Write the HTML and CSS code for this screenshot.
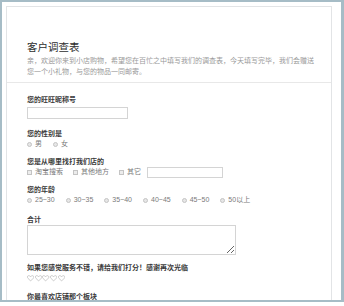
FILE: index.html
```html
<!DOCTYPE html>
<html lang="zh">
<head>
<meta charset="utf-8">
<title>客户调查表</title>
<link rel="stylesheet" href="styles.css">
</head>
<body>
<div class="window">
  <div class="panel">
    <div class="header">
      <h1 class="title">客户调查表</h1>
      <p class="desc">亲，欢迎你来到小店购物，希望您在百忙之中填写我们的调查表，今天填写完毕，我们会赠送您一个小礼物，与您的物品一同邮寄。</p>
    </div>
    <form class="form">
      <div class="field field-text">
        <div class="label">您的旺旺昵称号</div>
        <input class="text-input" type="text">
      </div>
      <div class="field">
        <div class="label">您的性别是</div>
        <div class="options">
          <span class="opt"><span class="radio"></span>男</span>
          <span class="opt"><span class="radio"></span>女</span>
        </div>
      </div>
      <div class="field">
        <div class="label">您是从哪里找打我们店的</div>
        <div class="options checks">
          <span class="opt"><span class="check"></span>淘宝搜索</span>
          <span class="opt"><span class="check"></span>其他地方</span>
          <span class="opt"><span class="check"></span>其它<input class="other-input" type="text"></span>
        </div>
      </div>
      <div class="field field-age">
        <div class="label">您的年龄</div>
        <div class="options">
          <span class="opt"><span class="radio"></span>25~30</span>
          <span class="opt"><span class="radio"></span>30~35</span>
          <span class="opt"><span class="radio"></span>35~40</span>
          <span class="opt"><span class="radio"></span>40~45</span>
          <span class="opt"><span class="radio"></span>45~50</span>
          <span class="opt"><span class="radio"></span>50以上</span>
        </div>
      </div>
      <div class="field">
        <div class="label">合计</div>
        <textarea class="area"></textarea>
      </div>
      <div class="field">
        <div class="label">如果您感觉服务不错，请给我们打分！感谢再次光临</div>
        <div class="hearts">
          <svg class="heart" viewBox="0 0 16 14"><path d="M8 13 L2 7 C0 5 0.5 1.5 3.8 1.2 C5.8 1 7 2.3 8 3.6 C9 2.3 10.2 1 12.2 1.2 C15.5 1.5 16 5 14 7 Z"/></svg>
          <svg class="heart" viewBox="0 0 16 14"><path d="M8 13 L2 7 C0 5 0.5 1.5 3.8 1.2 C5.8 1 7 2.3 8 3.6 C9 2.3 10.2 1 12.2 1.2 C15.5 1.5 16 5 14 7 Z"/></svg>
          <svg class="heart" viewBox="0 0 16 14"><path d="M8 13 L2 7 C0 5 0.5 1.5 3.8 1.2 C5.8 1 7 2.3 8 3.6 C9 2.3 10.2 1 12.2 1.2 C15.5 1.5 16 5 14 7 Z"/></svg>
          <svg class="heart" viewBox="0 0 16 14"><path d="M8 13 L2 7 C0 5 0.5 1.5 3.8 1.2 C5.8 1 7 2.3 8 3.6 C9 2.3 10.2 1 12.2 1.2 C15.5 1.5 16 5 14 7 Z"/></svg>
          <svg class="heart" viewBox="0 0 16 14"><path d="M8 13 L2 7 C0 5 0.5 1.5 3.8 1.2 C5.8 1 7 2.3 8 3.6 C9 2.3 10.2 1 12.2 1.2 C15.5 1.5 16 5 14 7 Z"/></svg>
        </div>
      </div>
      <div class="field">
        <div class="label">你最喜欢店铺那个板块</div>
      </div>
    </form>
  </div>
</div>
</body>
</html>
```
FILE: styles.css
```css
* { box-sizing: border-box; }
html, body {
  margin: 0;
  padding: 0;
  background: #ffffff;
}
body {
  width: 344px;
  height: 306px;
  overflow: hidden;
  font-family: "Liberation Sans", "Noto Sans CJK SC", sans-serif;
}
.window {
  width: 344px;
  height: 302px;
  border-style: solid;
  border-color: #a6bcc6;
  border-width: 2px 3px 2px 2px;
  padding: 4px 9px 0 4px;
  background: #ffffff;
  overflow: hidden;
}
.panel {
  height: 320px;
  border: 1px solid #e2e4e6;
  background: #ffffff;
}
.header {
  padding: 33px 20px 5px 20px;
  border-bottom: 1px solid #e8e8e8;
}
.title {
  margin: 0;
  font-size: 10.5px;
  line-height: 15px;
  font-weight: normal;
  color: #2e2e2e;
}
.desc {
  margin: 0;
  font-size: 7px;
  line-height: 11px;
  color: #9a9a9a;
  width: 292px;
}
.form {
  display: flex;
  flex-direction: column;
  gap: 8px;
  padding: 12px 20px 0 20px;
}
.field {
  display: flex;
  flex-direction: column;
  align-items: flex-start;
}
.field-text { margin-bottom: 2px; }
.field-age { margin-bottom: 2px; }
.label {
  font-size: 7px;
  line-height: 10px;
  font-weight: bold;
  color: #3a3a3a;
}
.text-input {
  margin: 2px 0 0 0;
  width: 101px;
  height: 12px;
  border: 1px solid #d4d4d4;
  padding: 0;
  background: #ffffff;
}
.options {
  display: flex;
  align-items: center;
  gap: 11px;
  height: 10px;
}
.checks { gap: 10px; }
.opt {
  display: flex;
  align-items: center;
  gap: 3px;
  font-size: 7px;
  line-height: 10px;
  color: #7a7a7a;
}
.radio {
  width: 5px;
  height: 5px;
  border-radius: 50%;
  border: 1px solid #c4c4c4;
  background: #e6e6e6;
}
.check {
  width: 5px;
  height: 5px;
  border: 1px solid #c4c4c4;
  background: #ececec;
}
.other-input {
  margin: 0 0 0 3px;
  width: 76px;
  height: 11px;
  border: 1px solid #d4d4d4;
  padding: 0;
  background: #ffffff;
}
.area {
  margin: 0;
  width: 209px;
  height: 30px;
  border: 1px solid #d4d4d4;
  padding: 0;
  resize: both;
  background: #ffffff;
}
.hearts {
  display: flex;
  gap: 0.5px;
  height: 11px;
  align-items: center;
}
.heart {
  width: 7.2px;
  height: 6.5px;
  fill: none;
  stroke: #b0b0b0;
  stroke-width: 1.4;
}
```
